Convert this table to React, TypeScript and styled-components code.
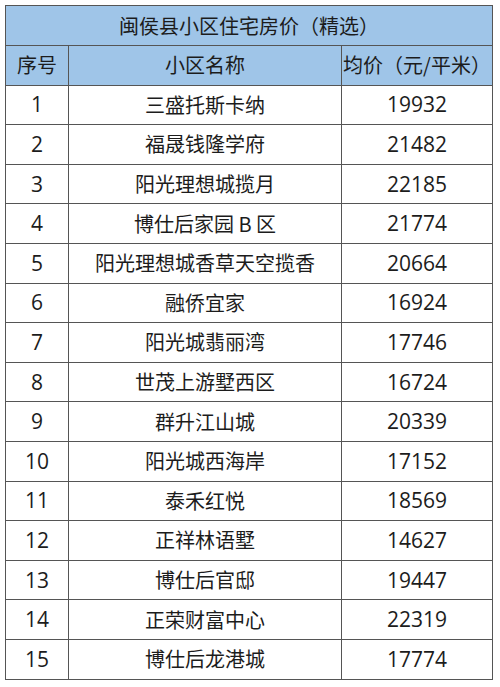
import React from "react";
import styled, { createGlobalStyle } from "styled-components";

const Global = createGlobalStyle`
  html, body { margin: 0; padding: 0; background: #fff; }
  body { width: 500px; height: 687px; overflow: hidden; }
`;

const Page = styled.div`
  padding: 5px 0 0 5px;
`;

const Table = styled.table`
  border-collapse: collapse;
  width: 487px;
  table-layout: fixed;
  font-family: "Noto Sans CJK SC", "Noto Sans", sans-serif;
  color: #1c1c1c;
  border: 1.5px solid #555;
`;

const Cell = styled.td<{ $head?: boolean; $num?: boolean }>`
  border: 1px solid #555;
  text-align: center;
  vertical-align: middle;
  padding: 0;
  height: 38.6px;
  font-size: ${(p) => (p.$num ? "21px" : "20px")};
  line-height: 1;
  background: ${(p) => (p.$head ? "#9fc5e8" : "#fff")};
  font-family: ${(p) =>
    p.$num
      ? `"Open Sans", "Noto Sans CJK SC", sans-serif`
      : `"Noto Sans CJK SC", "Noto Sans", sans-serif`};
`;

const Title = styled(Cell)`
  height: 39px;
`;

const rows: [string, string][] = [
  ["三盛托斯卡纳", "19932"],
  ["福晟钱隆学府", "21482"],
  ["阳光理想城揽月", "22185"],
  ["博仕后家园 B 区", "21774"],
  ["阳光理想城香草天空揽香", "20664"],
  ["融侨宜家", "16924"],
  ["阳光城翡丽湾", "17746"],
  ["世茂上游墅西区", "16724"],
  ["群升江山城", "20339"],
  ["阳光城西海岸", "17152"],
  ["泰禾红悦", "18569"],
  ["正祥林语墅", "14627"],
  ["博仕后官邸", "19447"],
  ["正荣财富中心", "22319"],
  ["博仕后龙港城", "17774"],
];

export default function App() {
  return (
    <Page>
      <Global />
      <Table>
        <colgroup>
          <col style={{ width: 63 }} />
          <col style={{ width: 273 }} />
          <col style={{ width: 151 }} />
        </colgroup>
        <tbody>
          <tr>
            <Title $head colSpan={3}>闽侯县小区住宅房价（精选）</Title>
          </tr>
          <tr>
            <Cell $head>序号</Cell>
            <Cell $head>小区名称</Cell>
            <Cell $head>均价（元/平米）</Cell>
          </tr>
          {rows.map(([name, price], i) => (
            <tr key={i}>
              <Cell $num>{i + 1}</Cell>
              <Cell>{name}</Cell>
              <Cell $num>{price}</Cell>
            </tr>
          ))}
        </tbody>
      </Table>
    </Page>
  );
}
